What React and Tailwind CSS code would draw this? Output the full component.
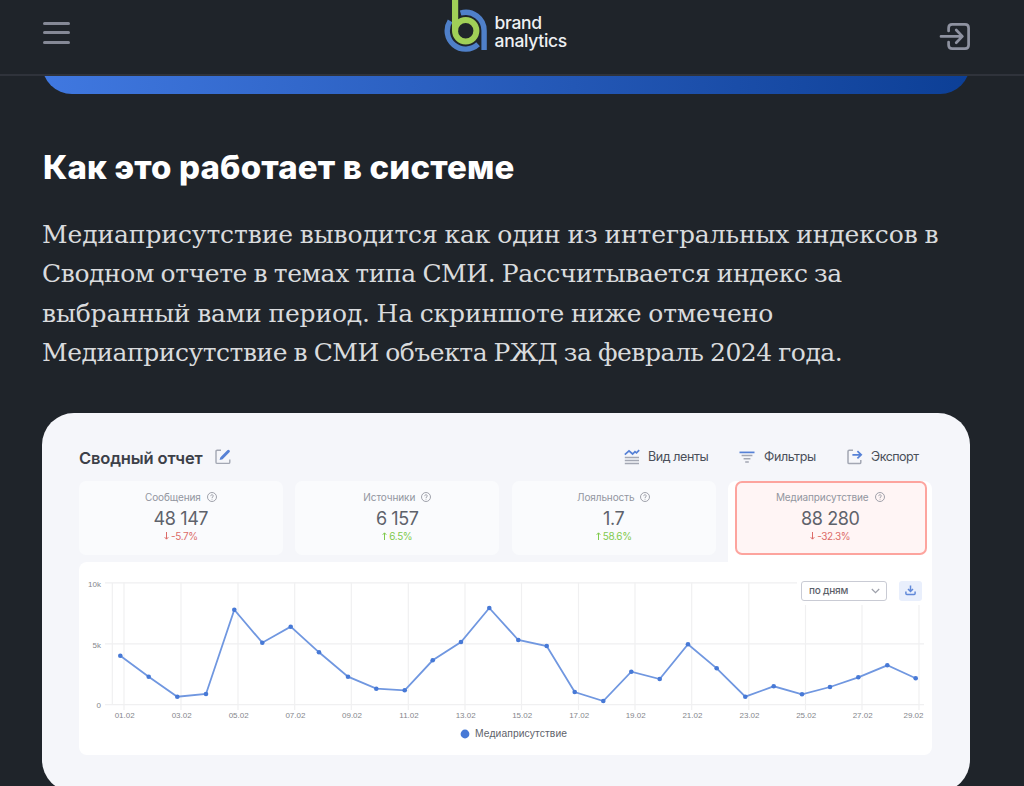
import React from "react";

const points = [
  [120.3, 655.7], [148.7, 676.7], [177.3, 696.7], [206, 694], [234.3, 609.7],
  [262.3, 642.7], [290.7, 626.7], [319, 652.3], [348, 676.7], [376.3, 688.7],
  [404.7, 690.3], [432.7, 660.3], [461, 642], [489.3, 608], [518.3, 640],
  [546.7, 646], [574.7, 692], [603.3, 701], [631.3, 671.7], [659.7, 679],
  [688, 644.3], [716.7, 668.3], [745.3, 696.7], [773.7, 686.3], [802, 694.3],
  [830, 687], [858.3, 677.3], [887.3, 665.3], [915.7, 678.3],
];

const ticks = [
  { x: 124, label: "01.02" },
  { x: 181, label: "03.02" },
  { x: 238, label: "05.02" },
  { x: 294.7, label: "07.02" },
  { x: 351.3, label: "09.02" },
  { x: 408.3, label: "11.02" },
  { x: 465, label: "13.02" },
  { x: 521.5, label: "15.02" },
  { x: 578.5, label: "17.02" },
  { x: 635, label: "19.02" },
  { x: 691.7, label: "21.02" },
  { x: 748.8, label: "23.02" },
  { x: 805.5, label: "25.02" },
  { x: 862, label: "27.02" },
  { x: 919, label: "29.02" },
];

const stats = [
  { name: "Сообщения", value: "48 147", delta: "-5.7%", up: false },
  { name: "Источники", value: "6 157", delta: "6.5%", up: true },
  { name: "Лояльность", value: "1.7", delta: "58.6%", up: true },
  { name: "Медиаприсутствие", value: "88 280", delta: "-32.3%", up: false, active: true },
];

const Logo = () => (
  <div className="mr-[2px] flex items-start gap-[7px]">
    <svg width="44" height="54" viewBox="444 0 44 54" fill="none">
      <path d="M460.6 13 A18.4 18.4 0 0 1 484.1 30.7 V50" stroke="#4f80c9" strokeWidth="5.4" />
      <path d="M450.1 20.9 A18.4 18.4 0 0 0 478.1 44.3" stroke="#4f80c9" strokeWidth="5.4" />
      <circle cx="465.7" cy="30.7" r="10.7" stroke="#a0cf57" strokeWidth="6" />
      <path d="M455.1 0 V31" stroke="#a0cf57" strokeWidth="6.2" />
    </svg>
    <div className="-ml-[0.5px] pt-[14px] text-[17.5px] leading-[17.5px] font-medium text-[#eef0f2]">
      <div className="tracking-[-0.3px]">brand</div>
      <div className="tracking-[-0.3px]">analytics</div>
    </div>
  </div>
);

const Header = () => (
  <header className="flex h-[76px] items-start justify-between border-b-2 border-[#2f333b] pl-[43px] pr-[53px]">
    <div className="flex w-[31px] flex-col gap-[6.3px] pt-[22px]">
      <span className="h-[3px] w-[27px] rounded-full bg-[#858996]" />
      <span className="h-[3px] w-[27px] rounded-full bg-[#858996]" />
      <span className="h-[3px] w-[27px] rounded-full bg-[#858996]" />
    </div>
    <Logo />
    <svg className="mt-[22px]" width="32" height="30" viewBox="939 22 32 30" fill="none" stroke="#8e92a0" strokeWidth="2.7" strokeLinecap="round" strokeLinejoin="round">
      <path d="M948.6 31 V28 Q948.6 24.4 952.2 24.4 H965 Q968.6 24.4 968.6 28 V45 Q968.6 48.6 965 48.6 H952.2 Q948.6 48.6 948.6 45 V42" />
      <path d="M941 36.4 H962 M956.2 30 L962.4 36.4 L956.2 42.8" />
    </svg>
  </header>
);

const HelpIcon = () => (
  <svg width="10" height="10" viewBox="0 0 10 10" fill="none" stroke="#9699a3" strokeWidth="0.9">
    <circle cx="5" cy="5" r="4.5" />
    <path d="M3.7 4.1 C3.7 2.3 6.4 2.4 6.3 4 C6.2 4.9 5 4.9 5 6 M5 6.8 V7.6" />
  </svg>
);

const StatContent = ({ stat }) => (
  <>
    <div className="flex items-center gap-[6px]">
      <span className="text-[10px] leading-[14px] tracking-[-0.1px] text-[#9296a0]">
        {stat.name}
      </span>
      <HelpIcon />
    </div>
    <div className="mt-[4px] text-[18px] leading-[22px] tracking-[-0.4px] text-[#5e626b]">
      {stat.value}
    </div>
    <div className={`-mt-px flex items-center gap-[2px] text-[10px] leading-[14px] tracking-[-0.4px] ${stat.up ? "text-[#7fca4c]" : "text-[#dc6b68]"}`}>
      <svg width="5" height="8" viewBox="0 0 5 8" fill="none" stroke="currentColor" strokeWidth="1">
        <path d={stat.up ? "M2.5 8 V1 M0.7 2.8 L2.5 0.8 L4.3 2.8" : "M2.5 0 V7 M0.7 5.2 L2.5 7.2 L4.3 5.2"} />
      </svg>
      <span>{stat.delta}</span>
    </div>
  </>
);

const Stats = () => (
  <div className="grid h-[81px] grid-cols-4 gap-x-[12.7px]">
    {stats.map((stat) =>
      stat.active ? (
        <div key={stat.name} className="rounded-t-lg bg-white pl-[6.6px] pr-[5.4px]">
          <div className="flex h-[74px] flex-col items-center rounded-[7px] border-2 border-[#fda49e] bg-[#fff5f5] pt-[7px] pr-px">
            <StatContent stat={stat} />
          </div>
        </div>
      ) : (
        <div key={stat.name} className="flex h-[74px] flex-col items-center rounded-[7px] bg-[#fafbfd] pt-[9px]">
          <StatContent stat={stat} />
        </div>
      )
    )}
  </div>
);

const Toolbar = () => (
  <div className="flex h-[18px] items-center text-[12.5px] text-[#4a4f59]">
    <h3 className="mt-[3px] text-[16.5px] font-semibold tracking-[-0.15px] text-[#3c4048]">Сводный отчет</h3>
    <svg className="ml-[12px]" width="16" height="16" viewBox="0 0 16 16" fill="none">
      <path d="M6 1.2 H2.2 Q1 1.2 1 2.4 V13.2 Q1 14.4 2.2 14.4 H13.6 Q14.8 14.4 14.8 13.2 V10.5" stroke="#a3a7b3" strokeWidth="1.4" />
      <path d="M7 8.7 L13.4 2.3" stroke="#5681d6" strokeWidth="3" strokeLinecap="round" />
      <path d="M4.6 11 L5.3 8.3 L7.4 10.3 Z" fill="#5681d6" />
    </svg>

    <div className="ml-auto mr-[14px] flex items-center">
      <svg width="16" height="16" viewBox="0 0 16 16" fill="none" strokeWidth="1.4">
        <path d="M0.8 5.6 L5 1.8 L8.6 5 L11 2.6 L12.5 3.8 L15.2 1.2" stroke="#5681d6" strokeWidth="1.7" />
        <path d="M0.8 8.5 H15 M0.8 11.5 H15 M0.8 14.5 H15" stroke="#a3a7b3" />
      </svg>
      <span className="ml-[8px] w-[60px] pt-[2px] whitespace-nowrap tracking-[-0.4px]">Вид ленты</span>
      <svg className="ml-[31px]" width="16" height="14" viewBox="0 0 16 14" fill="none" strokeWidth="1.5">
        <path d="M0.5 2.4 H15.5" stroke="#5681d6" strokeWidth="1.7" />
        <path d="M2.6 5.6 H13.4 M4.6 8.8 H11.4 M6.2 12 H9.8" stroke="#a3a7b3" />
      </svg>
      <span className="ml-[9px] w-[51px] pt-[2px] whitespace-nowrap tracking-[-0.4px]">Фильтры</span>
      <svg className="ml-[32px]" width="16" height="16" viewBox="0 0 16 16" fill="none">
        <path d="M6 1.2 H2.2 Q1 1.2 1 2.4 V13.4 Q1 14.6 2.2 14.6 H12.6 Q13.8 14.6 13.8 13.4 V11" stroke="#a3a7b3" strokeWidth="1.5" />
        <path d="M5.4 5.8 H14 M10.4 2.2 L14.2 5.8 L10.4 9.4" stroke="#5681d6" strokeWidth="1.7" />
      </svg>
      <span className="ml-[8px] w-[47px] pt-[2px] whitespace-nowrap tracking-[-0.5px]">Экспорт</span>
    </div>
  </div>
);

const Chart = () => (
  <div className="relative h-[193px] rounded-b-lg rounded-tl-lg bg-white">
    <svg width="853" height="193" viewBox="79 562 853 193" className="block font-[Liberation_Sans,sans-serif]">
      <g stroke="#f0f0f1" strokeWidth="1.2">
        <path d="M105 582.8 H797 M105 643.8 H924 M105 704.6 H924 M112.3 582.8 V704.6" />
        {ticks.map((t) => (
          <line key={t.label} x1={t.x} x2={t.x} y1={t.x > 800 ? 605 : 582.8} y2="710" />
        ))}
      </g>
      <g fill="#85878c" fontSize="8">
        <text x="101" y="586.7" textAnchor="end">10k</text>
        <text x="101" y="647.6" textAnchor="end">5k</text>
        <text x="101" y="708" textAnchor="end">0</text>
        {ticks.map((t) => (
          <text key={t.label} x={t.x > 900 ? 913.5 : t.x + 0.7} y="718.4" textAnchor="middle">
            {t.label}
          </text>
        ))}
      </g>
      <polyline points={points.map((p) => p.join(",")).join(" ")} fill="none" stroke="#7097e0" strokeWidth="1.8" />
      {points.map(([x, y]) => (
        <circle key={x} cx={x} cy={y} r="2.3" fill="#4779d6" />
      ))}
      <circle cx="465" cy="734" r="4.4" fill="#4779d6" />
      <text x="475" y="737.3" fontSize="10.3" fill="#5e626a" textLength="92">Медиаприсутствие</text>
    </svg>

    {/* Controls over the plot */}
    <div className="absolute right-[10px] top-[19px] flex items-center gap-[12px]">
      <div className="flex h-[20px] w-[86px] items-center justify-between rounded-[3px] border border-[#c9cbd4] bg-white pl-[7px] pr-[6px] text-[10px] text-[#5c6069]">
        <span className="font-medium tracking-[-0.2px]">по дням</span>
        <svg width="9" height="6" viewBox="0 0 9 6" fill="none" stroke="#9da0aa" strokeWidth="1.2">
          <path d="M0.8 1 L4.5 4.7 L8.2 1" />
        </svg>
      </div>
      <div className="flex h-[20px] w-[23px] items-center justify-center rounded-[3px] bg-[#e9effc]">
        <svg width="11" height="11" viewBox="0 0 11 11" fill="none" stroke="#6189d9" strokeWidth="1.5">
          <path d="M5.5 0.5 V6 M3 4 L5.5 6.5 L8 4 M0.9 6.6 V8.6 Q0.9 9.6 1.9 9.6 H9.1 Q10.1 9.6 10.1 8.6 V6.6" />
        </svg>
      </div>
    </div>
  </div>
);

const App = () => {
  return (
    <div className="h-[786px] overflow-hidden bg-[#1f242a] font-[Inter,sans-serif]">
      <Header />

      <main className="pl-[42px] pr-[54px]">
        <div className="h-[18px] overflow-hidden">
          <div className="-mt-[42px] h-[60px] rounded-[32px] bg-linear-to-r from-[#4078e0] to-[#0c3f96]" />
        </div>

        <h2 className="mt-[51px] ml-px whitespace-nowrap text-[33px] leading-[44px] font-extrabold tracking-[0.17px] text-white">
          Как это работает в системе
        </h2>

        <p className="mt-[26px] whitespace-nowrap font-['DejaVu_Serif',serif] text-[25px] leading-[39.4px] [word-spacing:-1px] text-[#d9dbdd]">
          <span className="block tracking-[-0.1px]">Медиаприсутствие выводится как один из интегральных индексов в</span>
          <span className="block tracking-[-0.4px]">Сводном отчете в темах типа СМИ. Рассчитывается индекс за</span>
          <span className="block tracking-[-0.16px]">выбранный вами период. На скриншоте ниже отмечено</span>
          <span className="block tracking-[-0.47px]">Медиаприсутствие в СМИ объекта РЖД за февраль 2024 года.</span>
        </p>

        <section className="mt-[40px] h-[379px] rounded-[32px] bg-[#f5f6fa] pl-[37px] pr-[38px] pt-[35px]">
          <Toolbar />
          <div className="mt-[15px]">
            <Stats />
            <Chart />
          </div>
        </section>
      </main>
    </div>
  );
};

export default App;
